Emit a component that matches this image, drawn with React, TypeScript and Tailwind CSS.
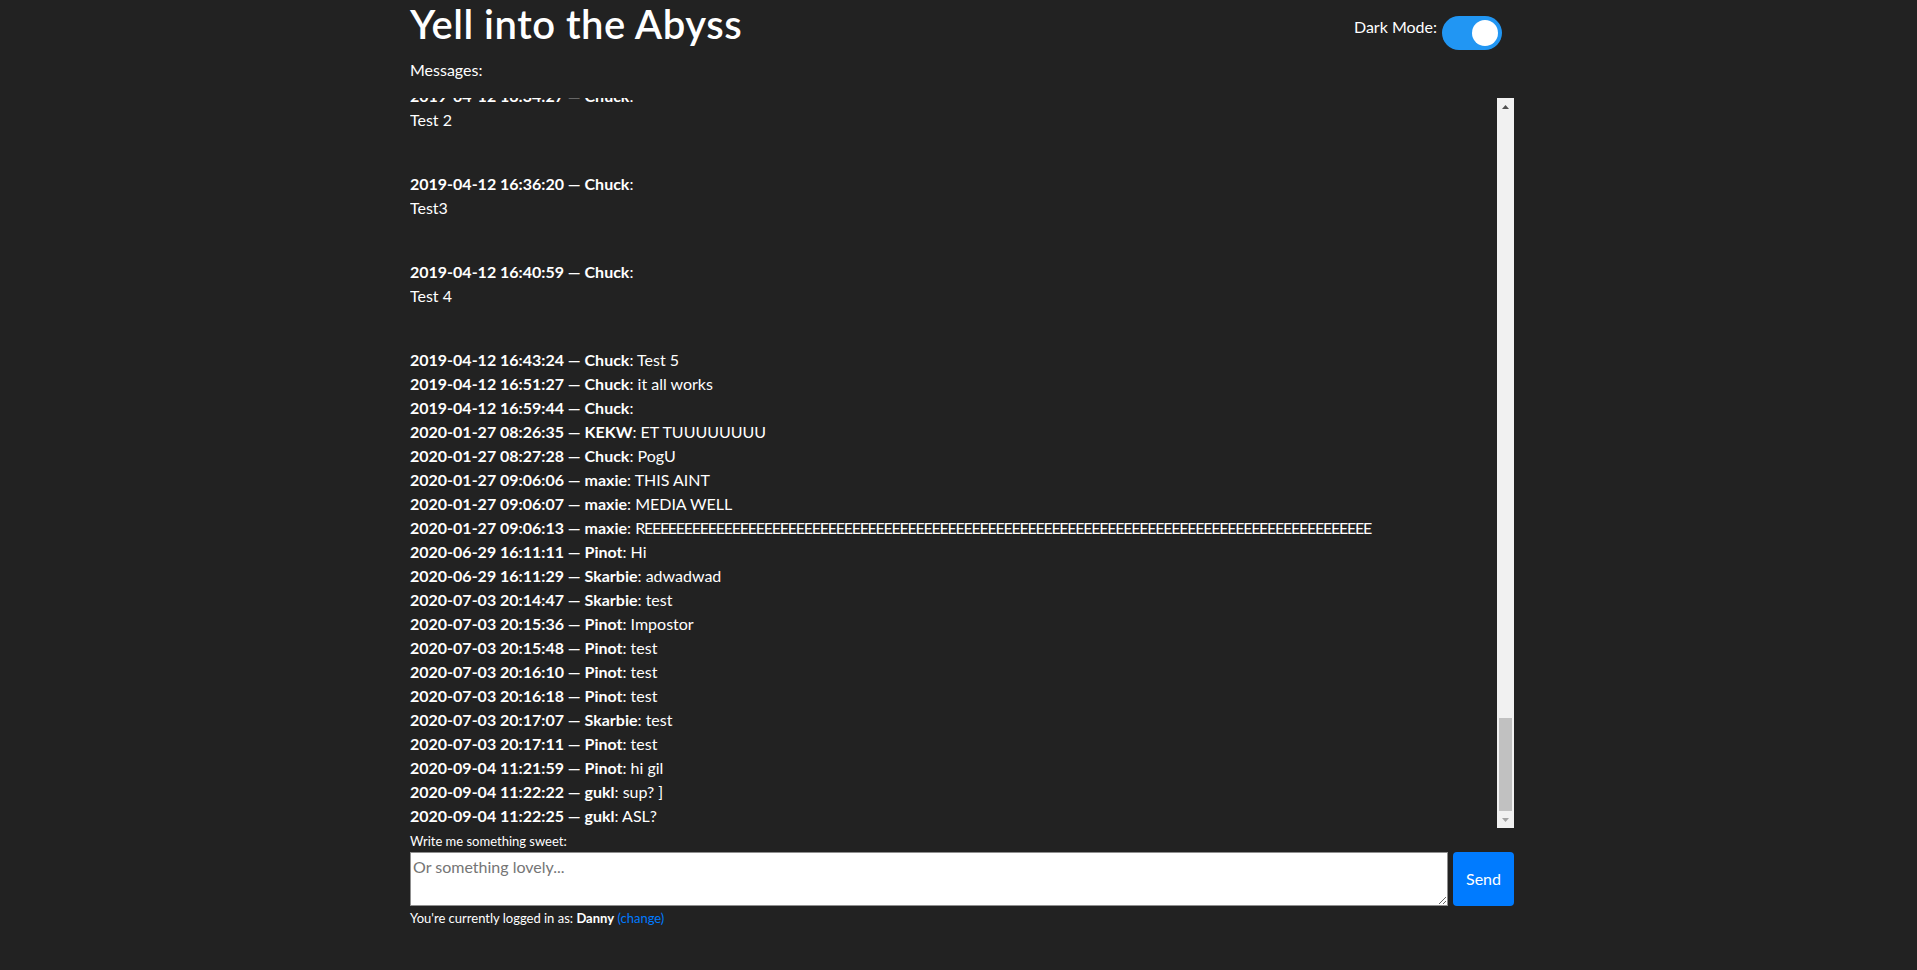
import React from "react";

type Msg = { ts: string; name: string; text: string; multi?: boolean; tight?: boolean };

const E91 = "R" + "E".repeat(91);

const messages: Msg[] = [
  { ts: "2019-04-12 16:30:02", name: "Chuck", text: "Test 1", multi: true },
  { ts: "2019-04-12 16:34:27", name: "Chuck", text: "Test 2", multi: true },
  { ts: "2019-04-12 16:36:20", name: "Chuck", text: "Test3", multi: true },
  { ts: "2019-04-12 16:40:59", name: "Chuck", text: "Test 4", multi: true },
  { ts: "2019-04-12 16:43:24", name: "Chuck", text: "Test 5" },
  { ts: "2019-04-12 16:51:27", name: "Chuck", text: "it all works" },
  { ts: "2019-04-12 16:59:44", name: "Chuck", text: "" },
  { ts: "2020-01-27 08:26:35", name: "KEKW", text: "ET TUUUUUUUU" },
  { ts: "2020-01-27 08:27:28", name: "Chuck", text: "PogU" },
  { ts: "2020-01-27 09:06:06", name: "maxie", text: "THIS AINT" },
  { ts: "2020-01-27 09:06:07", name: "maxie", text: "MEDIA WELL" },
  { ts: "2020-01-27 09:06:13", name: "maxie", text: E91, tight: true },
  { ts: "2020-06-29 16:11:11", name: "Pinot", text: "Hi" },
  { ts: "2020-06-29 16:11:29", name: "Skarbie", text: "adwadwad" },
  { ts: "2020-07-03 20:14:47", name: "Skarbie", text: "test" },
  { ts: "2020-07-03 20:15:36", name: "Pinot", text: "Impostor" },
  { ts: "2020-07-03 20:15:48", name: "Pinot", text: "test" },
  { ts: "2020-07-03 20:16:10", name: "Pinot", text: "test" },
  { ts: "2020-07-03 20:16:18", name: "Pinot", text: "test" },
  { ts: "2020-07-03 20:17:07", name: "Skarbie", text: "test" },
  { ts: "2020-07-03 20:17:11", name: "Pinot", text: "test" },
  { ts: "2020-09-04 11:21:59", name: "Pinot", text: "hi gil" },
  { ts: "2020-09-04 11:22:22", name: "gukl", text: "sup? ]" },
  { ts: "2020-09-04 11:22:25", name: "gukl", text: "ASL?" },
];

function MessageRow({ m }: { m: Msg }) {
  if (m.multi) {
    return (
      <div className="mb-[40px]">
        <div className="whitespace-nowrap">
          <b className="font-bold">
            {m.ts} — {m.name}
          </b>
          :
        </div>
        <div>{m.text}</div>
      </div>
    );
  }
  return (
    <div className="whitespace-nowrap">
      <b className="font-bold">
        {m.ts} — {m.name}
      </b>
      :{" "}
      <span className={m.tight ? "tracking-[-1.25px]" : ""}>{m.text}</span>
    </div>
  );
}

function FakeScrollbar() {
  return (
    <div className="w-[17px] shrink-0 bg-[#f1f1f1] flex flex-col">
      <div className="h-[17px] flex items-center justify-center">
        <svg width="7" height="4" viewBox="0 0 7 4">
          <polygon points="3.5,0 7,4 0,4" fill="#505050" />
        </svg>
      </div>
      <div className="flex-1 flex flex-col justify-end">
        <div className="h-[93px] mx-[2px] bg-[#c1c1c1]" />
      </div>
      <div className="h-[17px] flex items-center justify-center">
        <svg width="7" height="4" viewBox="0 0 7 4">
          <polygon points="0,0 7,0 3.5,4" fill="#a3a3a3" />
        </svg>
      </div>
    </div>
  );
}

export default function App() {
  return (
    <div className="min-h-screen bg-[#222222] text-white font-['Lato',sans-serif] text-[16px] leading-6 pl-[7px]">
      <div className="mx-auto w-[1104px]">
        <div className="h-[48px] flex justify-between items-start">
          <h1 className="text-[40px] leading-[48px] font-semibold tracking-[0.5px]">Yell into the Abyss</h1>
          <div className="flex items-start gap-[5px] mt-[15px] mr-[12px]">
            <span className="leading-6">Dark Mode:</span>
            <div className="mt-[1px] w-[60px] h-[34px] rounded-full bg-[#2196f3] flex items-center justify-end pr-[4px]">
              <div className="w-[26px] h-[26px] rounded-full bg-white" />
            </div>
          </div>
        </div>
        <div className="mt-[10px] leading-6">Messages:</div>
        <div className="mt-[16px] h-[730px] flex">
          <div className="flex-1 overflow-hidden flex flex-col justify-end">
            {messages.map((m, i) => (
              <MessageRow key={i} m={m} />
            ))}
          </div>
          <FakeScrollbar />
        </div>
        <div className="mt-[3px] text-[13px] leading-[20px]">Write me something sweet:</div>
        <div className="mt-[1px] flex gap-[5px]">
          <textarea
            className="flex-1 h-[54px] bg-white border border-[#8f8f8f] px-[2px] py-[2px] text-[16px] leading-6 text-black placeholder:text-[#757575] outline-none"
            placeholder="Or something lovely..."
          />
          <button className="w-[61px] h-[54px] rounded-[4px] bg-[#007bff] text-white text-[16px]">
            Send
          </button>
        </div>
        <div className="mt-[2px] text-[13px] leading-[20px]">
          You're currently logged in as: <b className="font-bold">Danny</b>{" "}
          <span className="text-[#007bff]">(change)</span>
        </div>
      </div>
    </div>
  );
}
